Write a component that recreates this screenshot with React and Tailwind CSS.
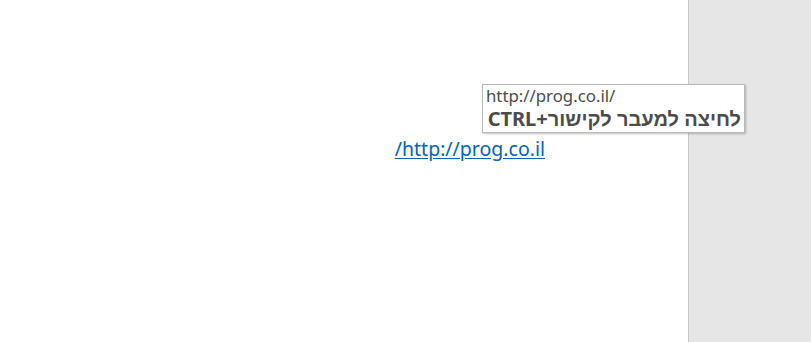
export default function App() {
  return (
    <div className="flex h-[342px] w-[811px] overflow-hidden bg-white font-['Noto_Sans',sans-serif]">
      {/* page */}
      <div className="relative w-[689px] shrink-0 border-r border-[#c6c6c6] bg-white">
        <div dir="rtl" className="pr-[143px] pt-[136px]">
          <a
            href="#"
            className="text-[19.5px] leading-[26px] text-[#0563c1] underline underline-offset-2"
          >
            http://prog.co.il/
          </a>
        </div>

        {/* hover tooltip */}
        <div className="absolute left-[482px] top-[84px] z-10 w-[263px] whitespace-nowrap border border-[#b9b9b9] bg-white px-[3px] pb-[1px] text-[#4c4c4c] shadow-[1px_1px_2px_rgba(0,0,0,0.25)]">
          <div className="text-[16.8px] leading-[22px]">http://prog.co.il/</div>
          <div dir="rtl" className="text-right text-[20px] font-bold leading-[24px]">
            לחיצה למעבר לקישור+CTRL
          </div>
        </div>
      </div>

      {/* side margin */}
      <div className="flex-1 bg-[#e6e6e6]" />
    </div>
  );
}
